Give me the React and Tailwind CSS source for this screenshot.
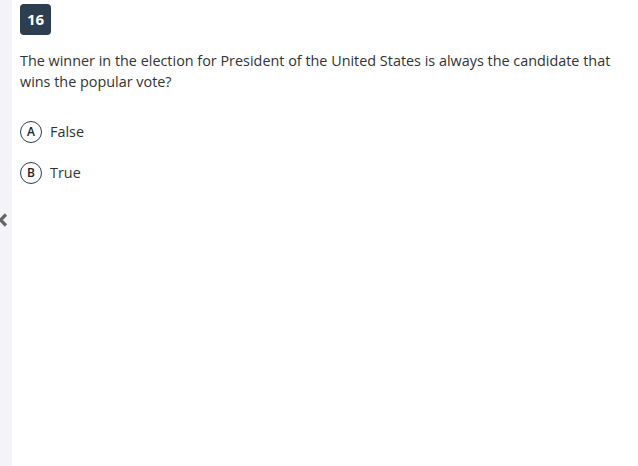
import React from 'react';

export default function App() {
  const options = [
    { key: 'A', label: 'False' },
    { key: 'B', label: 'True' },
  ];

  return (
    <div
      className="flex w-[638px] h-[466px] bg-white text-[#333]"
      style={{ fontFamily: '"Open Sans", "Noto Sans", sans-serif' }}
    >
      {/* barra lateral plegada */}
      <div className="relative w-[12px] shrink-0 bg-[#f4f3f8]">
        <svg
          className="absolute left-[-2px] top-[213px]"
          width="10"
          height="14"
          viewBox="0 0 10 14"
        >
          <path d="M8 1.5 L2.5 7 L8 12.5" fill="none" stroke="#666" strokeWidth="3.2" />
        </svg>
      </div>

      <div className="flex-1 pl-[8px] pr-[10px] pt-[4px]">
        <div className="w-[31px] h-[31px] rounded-[4px] bg-[#2d3e50] text-white text-[15px] font-bold flex items-center justify-center">
          16
        </div>

        <p className="mt-[15px] text-[14.4px] leading-[21px] text-[#333]">
          The winner in the election for President of the United States is always the candidate that
          wins the popular vote?
        </p>

        <div className="mt-[29px] flex flex-col gap-[19px]">
          {options.map((o) => (
            <div key={o.key} className="flex items-center gap-[8px]">
              <span className="w-[22px] h-[22px] rounded-full border border-[#2d3e50] flex items-center justify-center text-[12px] font-semibold text-[#222]">
                {o.key}
              </span>
              <span className="text-[14.4px] text-[#333]">{o.label}</span>
            </div>
          ))}
        </div>
      </div>
    </div>
  );
}
